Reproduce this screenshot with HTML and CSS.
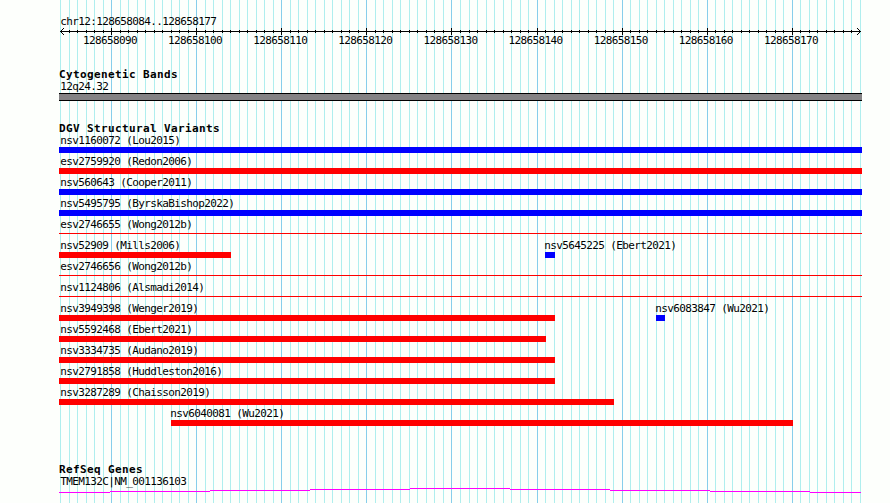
FILE: index.html
```html
<!DOCTYPE html>
<html lang="en">
<head>
<meta charset="utf-8">
<title>chr12:128658084..128658177</title>
<link rel="stylesheet" href="styles.css">
</head>
<body>
<main class="browser">
  <svg class="grid" width="890" height="503" aria-hidden="true">
    <path class="minor" id="minor"/>
    <path class="major" id="major"/>
  </svg>
  <header class="ruler">
    <div class="label">chr12:128658084..128658177</div>
    <svg width="803" height="7" aria-hidden="true">
      <path id="ticks" d="M1 3h801v1h-801z"/>
      <path d="M1 3h1v1h-1zM2 2h1v1h-1zM2 4h1v1h-1zM3 1h1v1h-1zM3 5h1v1h-1zM4 0h1v1h-1zM4 6h1v1h-1zM800 2h1v1h-1zM800 4h1v1h-1zM799 1h1v1h-1zM799 5h1v1h-1zM798 0h1v1h-1zM798 6h1v1h-1z"/>
    </svg>
    <div class="positions">
      <span>128658090</span><span>128658100</span><span>128658110</span><span>128658120</span><span>128658130</span><span>128658140</span><span>128658150</span><span>128658160</span><span>128658170</span>
    </div>
  </header>
  <section class="track cyto">
    <h2>Cytogenetic Bands</h2>
    <div class="label">12q24.32</div>
    <div class="band"></div>
  </section>
  <section class="track variants">
    <h2>DGV Structural Variants</h2>
    <div class="row"><div class="feature full"><div class="label">nsv1160072 (Lou2015)</div><div class="bar gain"></div></div></div>
    <div class="row"><div class="feature full"><div class="label">esv2759920 (Redon2006)</div><div class="bar loss"></div></div></div>
    <div class="row"><div class="feature full"><div class="label">nsv560643 (Cooper2011)</div><div class="bar gain"></div></div></div>
    <div class="row"><div class="feature full"><div class="label">nsv5495795 (ByrskaBishop2022)</div><div class="bar gain"></div></div></div>
    <div class="row"><div class="feature full"><div class="label">esv2746655 (Wong2012b)</div><div class="bar thin"></div></div></div>
    <div class="row"><div class="feature" style="width:172px"><div class="label">nsv52909 (Mills2006)</div><div class="bar loss"></div></div><div class="feature inner" style="width:10px;margin-left:314px"><div class="label">nsv5645225 (Ebert2021)</div><div class="bar gain"></div></div></div>
    <div class="row"><div class="feature full"><div class="label">esv2746656 (Wong2012b)</div><div class="bar thin"></div></div></div>
    <div class="row"><div class="feature full"><div class="label">nsv1124806 (Alsmadi2014)</div><div class="bar thin"></div></div></div>
    <div class="row"><div class="feature" style="width:496px"><div class="label">nsv3949398 (Wenger2019)</div><div class="bar loss"></div></div><div class="feature inner" style="width:9px;margin-left:101px"><div class="label">nsv6083847 (Wu2021)</div><div class="bar gain"></div></div></div>
    <div class="row"><div class="feature" style="width:487px"><div class="label">nsv5592468 (Ebert2021)</div><div class="bar loss"></div></div></div>
    <div class="row"><div class="feature" style="width:496px"><div class="label">nsv3334735 (Audano2019)</div><div class="bar loss"></div></div></div>
    <div class="row"><div class="feature" style="width:496px"><div class="label">nsv2791858 (Huddleston2016)</div><div class="bar loss"></div></div></div>
    <div class="row"><div class="feature" style="width:555px"><div class="label">nsv3287289 (Chaisson2019)</div><div class="bar loss"></div></div></div>
    <div class="row"><div class="feature inner" style="width:622px;margin-left:112px"><div class="label">nsv6040081 (Wu2021)</div><div class="bar loss"></div></div></div>
  </section>
  <section class="track genes">
    <h2>RefSeq Genes</h2>
    <div class="label">TMEM132C|NM_001136103</div>
    <svg class="intron" width="803" height="6" aria-hidden="true">
      <path d="M0 4h51v1H0zM51 3h100v1H51zM151 2h100v1H151zM251 1h100v1H251zM351 0h100v1H351zM451 1h100v1H451zM551 2h100v1H551zM651 3h100v1H651zM751 4h51v1H751z"/>
    </svg>
  </section>
</main>
<script src="script.js"></script>
</body>
</html>
```
FILE: styles.css
```css
body {
  margin: 0;
  background: #fdfffc;
  color: #000;
}

.browser {
  position: relative;
  box-sizing: border-box;
  width: 890px;
  height: 503px;
  padding: 15px 28px 0 59px;
  overflow: hidden;
  font: 11px/13px "DejaVu Sans Mono", monospace;
  letter-spacing: -0.622px;
}

.grid {
  position: absolute;
  top: 0;
  left: 0;
  z-index: -1;
}

svg {
  display: block;
  shape-rendering: crispEdges;
}

.minor { fill: #afeeee; }
.major { fill: #87ceeb; }

.label {
  height: 13px;
  padding-left: 1.3px;
  white-space: nowrap;
}

.ruler { height: 53px; }

.positions {
  display: flex;
  justify-content: space-between;
  width: 735px;
  margin: -1px 0 0 24px;
}

.track h2 {
  height: 12px;
  margin: 0;
  font-size: 11px;
  line-height: 13px;
  font-weight: bold;
  letter-spacing: 0.378px;
}

.cyto { height: 54px; }

.band {
  box-sizing: border-box;
  width: 803px;
  height: 8px;
  border: solid #000;
  border-width: 1px 0;
  background: #848284;
}

.variants { height: 341px; }

.row {
  display: flex;
  height: 21px;
}

.feature { flex: none; }
.full { width: 803px; }
.inner .label { padding-left: 0; margin-left: -0.8px; }
.bar { height: 6px; }
.gain { background: #00f; }
.loss { background: #f00; }

.thin {
  height: 1px;
  margin-top: 2px;
  background: #f00;
}

.intron { fill: #f0f; }
```
FILE: script.js
```js
// One grid line and ruler tick per base, a major one every ten bases.
const START = 60, BASES = 94, STEP = 800 / BASES;
let minor = "", major = "", ticks = "";
for (let k = 0; k <= BASES; k++) {
  const x = Math.round(START + k * STEP);
  const isMajor = k % 10 === 6;
  const line = `M${x} 0h1v503h-1z`;
  if (isMajor) major += line; else minor += line;
  if (k > 0 && k < BASES) {
    ticks += isMajor ? `M${x - 59} 0h1v7h-1z` : `M${x - 59} 2h1v3h-1z`;
  }
}
document.getElementById("minor").setAttribute("d", minor);
document.getElementById("major").setAttribute("d", major);
const axis = document.getElementById("ticks");
axis.setAttribute("d", axis.getAttribute("d") + ticks);
```
